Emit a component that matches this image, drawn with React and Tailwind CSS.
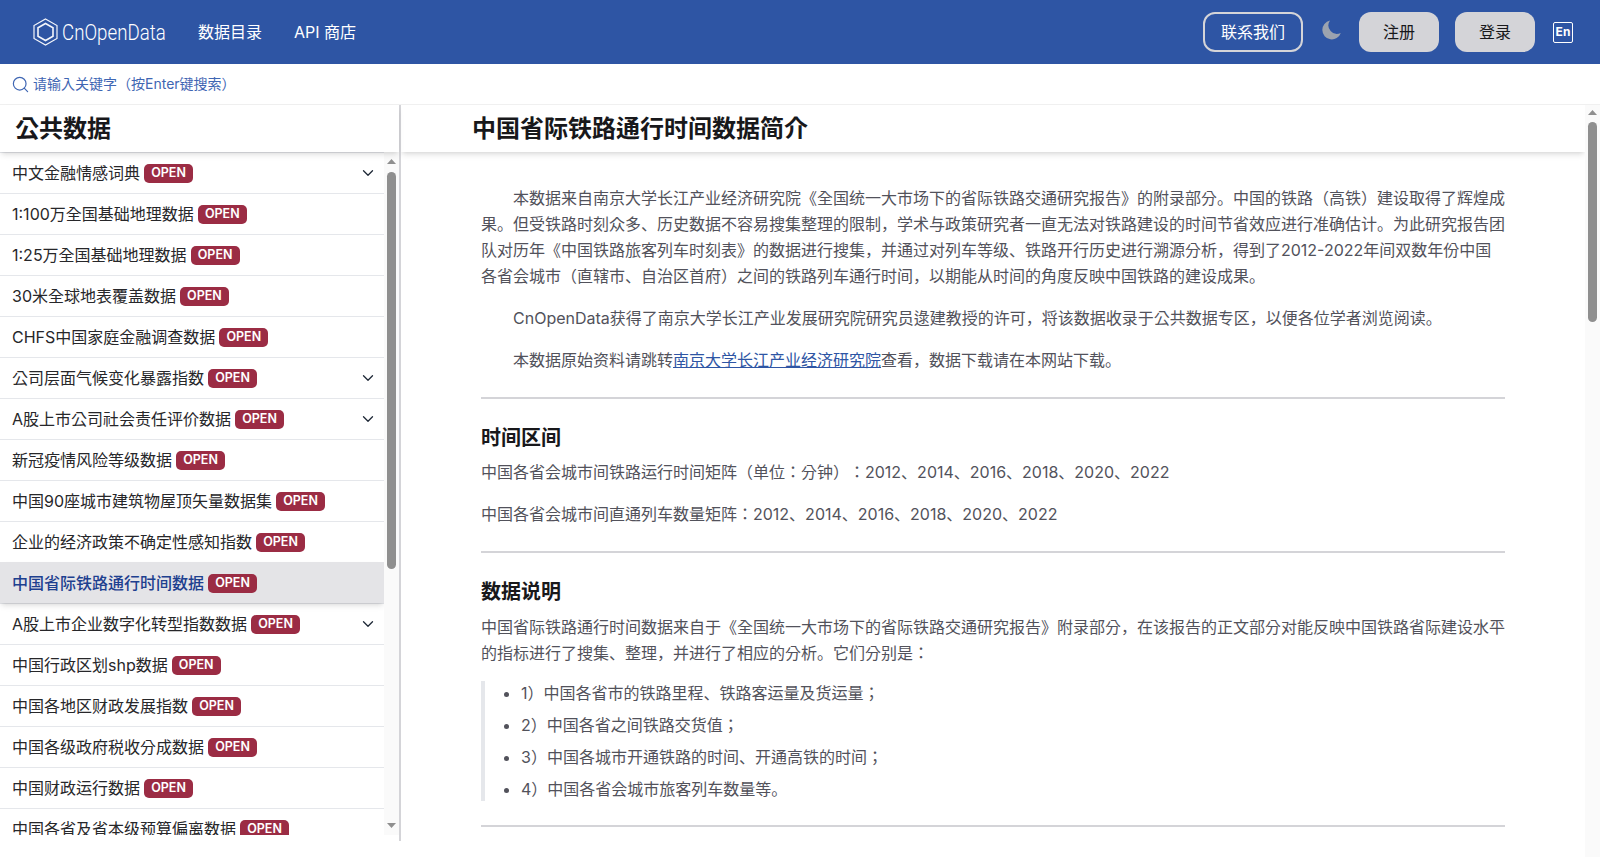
import { ChevronDown, Search } from "lucide-react";

const items = [
  { name: "中文金融情感词典", more: true },
  { name: "1:100万全国基础地理数据" },
  { name: "1:25万全国基础地理数据" },
  { name: "30米全球地表覆盖数据" },
  { name: "CHFS中国家庭金融调查数据" },
  { name: "公司层面气候变化暴露指数", more: true },
  { name: "A股上市公司社会责任评价数据", more: true },
  { name: "新冠疫情风险等级数据" },
  { name: "中国90座城市建筑物屋顶矢量数据集" },
  { name: "企业的经济政策不确定性感知指数" },
  { name: "中国省际铁路通行时间数据", active: true },
  { name: "A股上市企业数字化转型指数数据", more: true },
  { name: "中国行政区划shp数据" },
  { name: "中国各地区财政发展指数" },
  { name: "中国各级政府税收分成数据" },
  { name: "中国财政运行数据" },
  { name: "中国各省及省本级预算偏离数据" },
];

const Arrow = ({ down }) => {
  return (
    <svg width="9" height="5" viewBox="0 0 9 5" fill="#8f8f8f" className="shrink-0">
      <path d={down ? "M0 0 H9 L4.5 5 Z" : "M4.5 0 L9 5 H0 Z"} />
    </svg>
  );
};

const SideRow = ({ item }) => {
  return (
    <div
      className={
        item.active
          ? "relative flex h-[41px] items-center justify-between border-t border-[#e4e4e7] bg-[#e4e4e7] pl-3 pr-[7px] shadow-md"
          : "flex h-[41px] items-center justify-between border-t border-[#e5e7eb] pl-3 pr-[7px]"
      }
    >
      <div className="flex items-center gap-1">
        <span className={item.active ? "font-medium text-[#1e408f]" : "text-[#27272a]"}>
          {item.name}
        </span>
        <span className="flex h-[19px] w-[49px] items-center justify-center rounded-[5px] bg-[#9b2c44] text-[12.5px] font-semibold text-white">
          OPEN
        </span>
      </div>
      {item.more && <ChevronDown size={18} strokeWidth={1.75} className="text-[#1f2937]" />}
    </div>
  );
};

const App = () => {
  return (
    <div className="flex h-[857px] flex-col overflow-hidden bg-white font-['Inter','Noto_Sans_CJK_KR',sans-serif] text-base [text-spacing-trim:space-all]">
      <header className="flex h-16 shrink-0 items-center bg-[#2e55a4] pl-[33px] pr-[27px] text-white">
        <div className="flex items-center gap-[4px]">
          <svg width="25" height="28" viewBox="0 0 25 28" fill="none" stroke="#f4f6fb" strokeWidth="1.2">
            <path d="M12.5 1 L24 7.5 V20.5 L12.5 27 L1 20.5 V7.5 Z" />
            <path d="M12.5 5.5 L20 9.75 V18.25 L12.5 22.5 L5 18.25 V9.75 Z" strokeWidth="1.6" />
          </svg>
          <span className="w-[104px] origin-left scale-x-[0.85] font-['Roboto'] text-[22px] font-light">CnOpenData</span>
        </div>
        <nav className="ml-8 flex items-center gap-8">
          <a>数据目录</a>
          <a>API 商店</a>
        </nav>
        <div className="ml-auto flex items-center">
          <button className="h-10 w-[100px] rounded-xl border-2 border-[#d4d4d8]">联系我们</button>
          <svg width="20" height="20" viewBox="0 0 20 20" className="mb-1 ml-[19px]" fill="#9ca3af">
            <path d="M8 .6 A9.5 9.5 0 1 0 18.8 13 A8.5 8.5 0 0 1 8 .6 Z" />
          </svg>
          <button className="ml-[17px] h-10 w-20 rounded-xl bg-[#d4d4d8] text-[#18181b]">注册</button>
          <button className="ml-4 h-10 w-20 rounded-xl bg-[#d4d4d8] text-[#18181b]">登录</button>
          <span className="ml-[18px] flex h-[21px] w-5 items-center justify-center rounded-[2px] border border-white text-xs font-bold">
            En
          </span>
        </div>
      </header>

      <div className="flex h-[41px] shrink-0 items-center gap-[3px] border-b border-[#f0f0f0] pl-[11px] text-sm text-[#3f66b3]">
        <Search size={19} strokeWidth={1.5} />
        <span>请输入关键字（按Enter键搜索）</span>
      </div>

      <div className="flex min-h-0 flex-1">
        <aside className="h-[736px] w-[401px] shrink-0 border-r-2 border-[#d4d4d8]">
          <h2 className="relative z-10 flex h-[47px] items-center pl-[15px] text-2xl font-semibold text-[#18181b] shadow-md">公共数据</h2>
          <div className="flex h-[683px]">
            <div className="min-w-0 flex-1 overflow-hidden">
              {items.map((item) => (
                <SideRow key={item.name} item={item} />
              ))}
            </div>
            <div className="flex w-[15px] shrink-0 flex-col items-center bg-[#fafafa] pb-[7px] pt-[7px]">
              <Arrow />
              <div className="mt-[8px] h-[397px] w-[9px] rounded-full bg-[#8f8f8f]" />
              <div className="flex-1" />
              <Arrow down />
            </div>
          </div>
        </aside>

        <main className="flex min-w-0 flex-1">
          <div className="min-w-0 flex-1 overflow-hidden">
            <h1 className="flex h-[47px] items-center bg-white pl-[71px] text-2xl font-semibold text-[#18181b] shadow-md">
              中国省际铁路通行时间数据简介
            </h1>
            <article className="mx-auto max-w-5xl pt-[33px] leading-[26px] text-[#52525b]">
              <p className="mb-4 indent-8">
                本数据来自南京大学长江产业经济研究院《全国统一大市场下的省际铁路交通研究报告》的附录部分。中国的铁路（高铁）建设取得了辉煌成果。但受铁路时刻众多、历史数据不容易搜集整理的限制，学术与政策研究者一直无法对铁路建设的时间节省效应进行准确估计。为此研究报告团队对历年《中国铁路旅客列车时刻表》的数据进行搜集，并通过对列车等级、铁路开行历史进行溯源分析，得到了2012-2022年间双数年份中国各省会城市（直辖市、自治区首府）之间的铁路列车通行时间，以期能从时间的角度反映中国铁路的建设成果。
              </p>
              <p className="mb-4 indent-8">
                CnOpenData获得了南京大学长江产业发展研究院研究员逯建教授的许可，将该数据收录于公共数据专区，以便各位学者浏览阅读。
              </p>
              <p className="indent-8">
                本数据原始资料请跳转<a className="text-[#2e55a4] underline">南京大学长江产业经济研究院</a>查看，数据下载请在本网站下载。
              </p>
              <hr className="mb-[25px] mt-6 border-t-2 border-[#d4d4d8]" />
              <h3 className="mb-[7px] text-xl leading-7 font-semibold text-[#18181b]">时间区间</h3>
              <p className="mb-4">中国各省会城市间铁路运行时间矩阵（单位：分钟）：2012、2014、2016、2018、2020、2022</p>
              <p>中国各省会城市间直通列车数量矩阵：2012、2014、2016、2018、2020、2022</p>
              <hr className="mb-[25px] mt-6 border-t-2 border-[#d4d4d8]" />
              <h3 className="mb-2 text-xl leading-7 font-semibold text-[#18181b]">数据说明</h3>
              <p className="mb-[15px]">
                中国省际铁路通行时间数据来自于《全国统一大市场下的省际铁路交通研究报告》附录部分，在该报告的正文部分对能反映中国铁路省际建设水平的指标进行了搜集、整理，并进行了相应的分析。它们分别是：
              </p>
              <ul className="list-outside list-disc space-y-2 border-l-4 border-[#e5e7eb] pl-9 leading-6">
                <li>1）中国各省市的铁路里程、铁路客运量及货运量；</li>
                <li>2）中国各省之间铁路交货值；</li>
                <li>3）中国各城市开通铁路的时间、开通高铁的时间；</li>
                <li>4）中国各省会城市旅客列车数量等。</li>
              </ul>
              <hr className="my-6 border-t-2 border-[#d4d4d8]" />
            </article>
          </div>
          <div className="flex w-[15px] shrink-0 flex-col items-center bg-[#fafafa] pt-[5px]">
            <Arrow />
            <div className="mt-[7px] h-[200px] w-[9px] rounded-full bg-[#8f8f8f]" />
          </div>
        </main>
      </div>
    </div>
  );
};

export default App;
